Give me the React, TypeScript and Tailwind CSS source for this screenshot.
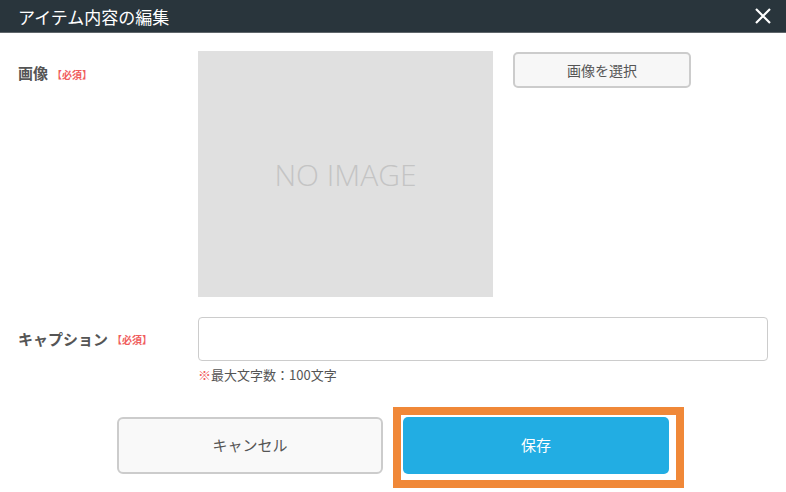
const FONT = { fontFamily: '"Noto Sans CJK JP", "Noto Sans", sans-serif' };

function Required() {
  return <span className="ml-1 text-[10px] font-bold text-[#f05d5d]">【必須】</span>;
}

export default function App() {
  return (
    <div className="w-[786px] h-[492px] bg-white overflow-hidden" style={FONT}>
      {/* header */}
      <div className="h-[33px] bg-[#29353c] border-b border-[#5f666b] flex items-center justify-between pl-[18px] pr-[14px]">
        <h1 className="text-[17px] text-white leading-none">アイテム内容の編集</h1>
        <svg width="18" height="18" viewBox="0 0 18 18" className="text-white">
          <path d="M2 2 L16 16 M16 2 L2 16" stroke="currentColor" strokeWidth="2.2" fill="none" />
        </svg>
      </div>

      {/* image row */}
      <div className="flex pl-[18px] pt-[18px]">
        <div className="w-[180px] pt-[9px]">
          <span className="text-[15px] font-bold text-[#555]">画像</span>
          <Required />
        </div>
        <div className="w-[295px] h-[246px] bg-[#e0e0e0] flex items-center justify-center">
          <span className="text-[30px] font-light text-[#c4c4c4]" style={{ fontFamily: '"Open Sans", sans-serif' }}>
            NO IMAGE
          </span>
        </div>
        <div className="pl-[20px] pt-px">
          <button className="w-[178px] h-[36px] rounded-[5px] border-2 border-[#cccccc] bg-[#f7f7f7] text-[14px] text-[#555]">
            画像を選択
          </button>
        </div>
      </div>

      {/* caption row */}
      <div className="flex pl-[18px] pt-[20px]">
        <div className="w-[180px] h-[44px] flex items-center">
          <span className="text-[15px] font-bold text-[#555]">キャプション</span>
          <Required />
        </div>
        <div className="w-[570px]">
          <input className="w-full h-[44px] rounded-[4px] border border-[#cccccc] bg-white outline-none px-3" />
          <p className="mt-[4px] text-[13px] text-[#555]">
            <span className="text-[#f05d5d]">※</span>最大文字数：100文字
          </p>
        </div>
      </div>

      {/* buttons */}
      <div className="flex justify-center gap-[20px] pt-[32px]">
        <button className="w-[266px] h-[57px] rounded-[6px] border-2 border-[#cccccc] bg-[#f9f9f9] text-[15px] text-[#555]">
          キャンセル
        </button>
        <div className="relative">
          <button className="w-[266px] h-[57px] rounded-[5px] bg-[#22ade3] text-[15px] text-white">
            保存
          </button>
          <div className="absolute left-[-10px] top-[-10px] w-[291px] h-[81px] border-[8px] border-[#f08838] pointer-events-none" />
        </div>
      </div>
    </div>
  );
}
